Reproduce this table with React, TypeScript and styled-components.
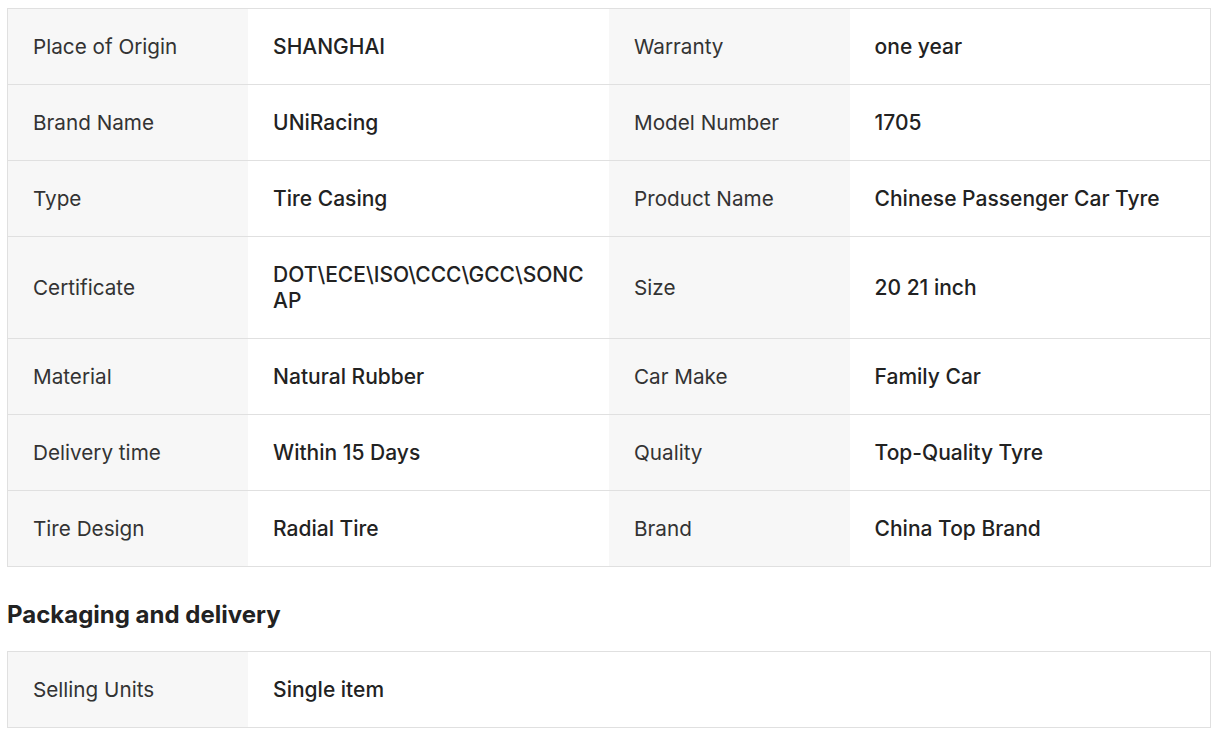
import styled, { createGlobalStyle } from "styled-components"

const GlobalStyle = createGlobalStyle`
    html, body {
        margin: 0;
        padding: 0;
        background: #fff;
    }
    body {
        padding: 8px 0 0 7px;
        font-family: Inter, "Noto Sans", sans-serif;
        color: #222;
    }
`

const Wrapper = styled.div`
    width: 1204px;
`

const Table = styled.table`
    width: 100%;
    border-collapse: collapse;
    table-layout: fixed;
    border: 1px solid #e0e0e0;
`

const Col = styled.col<{ wide?: boolean }>`
    width: ${props => (props.wide ? "30%" : "20%")};
`

const Row = styled.tr`
    border-bottom: 1px solid #e0e0e0;
`

const Label = styled.td`
    background: #f7f7f7;
    color: #333;
    font-size: 20.7px;
    line-height: 26px;
    padding: 25px 25px 24px;
    vertical-align: middle;
`

const Value = styled.td`
    color: #222;
    font-size: 21px;
    font-weight: 500;
    line-height: 26px;
    padding: 25px 25px 24px;
    vertical-align: middle;
    word-break: break-all;
`

const Heading = styled.h3`
    margin: 31px 0 19px;
    font-size: 24px;
    font-weight: 700;
    line-height: 34px;
    color: #222;
`

const attributes: [string, string, string, string][] = [
    ["Place of Origin", "SHANGHAI", "Warranty", "one year"],
    ["Brand Name", "UNiRacing", "Model Number", "1705"],
    ["Type", "Tire Casing", "Product Name", "Chinese Passenger Car Tyre"],
    ["Certificate", "DOT\\ECE\\ISO\\CCC\\GCC\\SONCAP", "Size", "20 21 inch"],
    ["Material", "Natural Rubber", "Car Make", "Family Car"],
    ["Delivery time", "Within 15 Days", "Quality", "Top-Quality Tyre"],
    ["Tire Design", "Radial Tire", "Brand", "China Top Brand"],
]

const App = () => {
    return (
        <Wrapper>
            <GlobalStyle />
            <Table>
                <colgroup>
                    <Col />
                    <Col wide />
                    <Col />
                    <Col wide />
                </colgroup>
                <tbody>
                    {attributes.map(([l1, v1, l2, v2]) => (
                        <Row key={l1}>
                            <Label>{l1}</Label>
                            <Value>{v1}</Value>
                            <Label>{l2}</Label>
                            <Value>{v2}</Value>
                        </Row>
                    ))}
                </tbody>
            </Table>
            <Heading>Packaging and delivery</Heading>
            <Table>
                <colgroup>
                    <Col />
                    <col />
                </colgroup>
                <tbody>
                    <Row>
                        <Label>Selling Units</Label>
                        <Value>Single item</Value>
                    </Row>
                </tbody>
            </Table>
        </Wrapper>
    )
}

export default App
